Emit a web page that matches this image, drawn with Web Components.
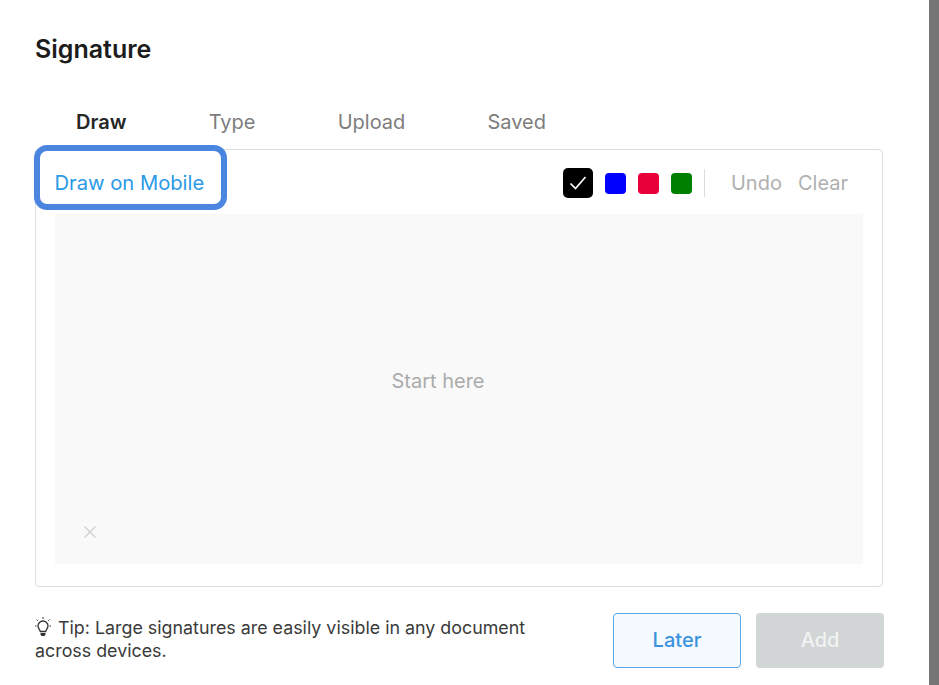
<!DOCTYPE html>
<html>
<head>
<meta charset="utf-8">
<style>
    html, body { margin: 0; height: 100%; }
    body { background: #757575; font-family: Inter, "Liberation Sans", sans-serif; overflow: hidden; }
</style>
</head>
<body>
<template id="signature_dialog_tpl">
    <style>
        :host {
            display: block;
            width: 929px;
            height: 685px;
            box-sizing: border-box;
            background: #fff;
            padding: 33px 46px 0 35px;
            overflow: hidden;
            color: #1f1f1f;
        }
        h1 {
            margin: 0;
            font-size: 25px;
            line-height: 32px;
            font-weight: 600;
            color: #1c1c1c;
        }
        .footer {
            display: flex;
            justify-content: space-between;
            margin-top: 26px;
            margin-right: -1px;
        }
    </style>
    <h1><slot name="title"></slot></h1>
    <signature-tabs></signature-tabs>
    <signature-pad></signature-pad>
    <div class="footer">
        <signature-tip></signature-tip>
        <signature-actions></signature-actions>
    </div>
</template>

<template id="signature_tabs_tpl">
    <style>
        :host {
            display: flex;
            gap: 82.2px;
            margin-top: 42px;
            padding-left: 41px;
            height: 42px;
            box-sizing: border-box;
            font-size: 20px;
            line-height: 30px;
            color: #7d7d7d;
        }
        .active { font-weight: 600; color: #262626; }
    </style>
    <span class="active">Draw</span>
    <span>Type</span>
    <span>Upload</span>
    <span>Saved</span>
</template>

<template id="signature_pad_tpl">
    <style>
        :host {
            display: block;
            position: relative;
            box-sizing: border-box;
            height: 438px;
            border: 1px solid #dedede;
            border-radius: 4px;
            padding: 0 19px 0 19px;
        }
        .toolbar {
            display: flex;
            align-items: center;
            box-sizing: border-box;
            height: 64px;
            padding-top: 2px;
        }
        .mobile {
            font-size: 20.2px;
            color: #2b9ae6;
            margin: 0 auto 2px -0.5px;
        }
        .highlight {
            position: absolute;
            left: -2px;
            top: -5px;
            width: 193px;
            height: 65px;
            box-sizing: border-box;
            border: 6px solid #4a86e0;
            border-radius: 13px;
        }
        .swatch {
            width: 21px;
            height: 21px;
            border-radius: 4px;
            margin-left: 12px;
        }
        .swatch.current {
            width: 30px;
            height: 30px;
            border-radius: 5px;
            margin-left: 0;
            background: #000;
            display: flex;
            align-items: center;
            justify-content: center;
        }
        .divider {
            width: 1px;
            height: 28px;
            background: #dcdcdc;
            margin: 0 26px 0 12px;
        }
        .action { font-size: 20px; color: #b0b0b0; }
        .action + .action { margin-left: 16px; margin-right: 15px; }
        .canvas {
            height: 350px;
            box-sizing: border-box;
            padding: 0 42px 16px 0;
            background: #f9f9f9;
            display: flex;
            align-items: center;
            justify-content: center;
            position: relative;
            font-size: 20px;
            color: #ababab;
        }
        .mark {
            position: absolute;
            left: 29px;
            bottom: 26px;
            width: 12px;
            height: 12px;
        }
    </style>
    <div class="toolbar">
        <span class="mobile">Draw on Mobile</span>
        <div class="swatch current">
            <svg width="18" height="16" viewBox="0 0 18 16" fill="none" stroke="#fff" stroke-width="1.7"><path d="M1.5 8.5 6.5 13.5 16.5 2"/></svg>
        </div>
        <div class="swatch" style="background:#0000ff"></div>
        <div class="swatch" style="background:#e8003a"></div>
        <div class="swatch" style="background:#008000"></div>
        <div class="divider"></div>
        <span class="action">Undo</span>
        <span class="action">Clear</span>
    </div>
    <div class="highlight"></div>
    <div class="canvas">
        Start here
        <svg class="mark" viewBox="0 0 12 12" fill="none" stroke="#cfcfcf" stroke-width="1.3"><path d="M.5.5l11 11M11.500.5l-11 11"/></svg>
    </div>
</template>

<template id="signature_tip_tpl">
    <style>
        :host {
            display: block;
            width: 510px;
            font-size: 17.85px;
            line-height: 23px;
            color: #3a3a3a;
            margin-top: 3px;
        }
        svg { vertical-align: -3px; margin-right: 7px; }
    </style>
    <svg width="16" height="20" viewBox="0 0 16 20" fill="none" stroke="#333" stroke-width="1.3"><path d="M3 9a5 5 0 1 1 10 0c0 2-1.500 3-2.300 5.500H5.300C4.500 12 3 11 3 9Z"/><path d="M5.500 16h5v1.500l-1 1.500h-3l-1-1.500Z" fill="#333" stroke="none"/><path d="M8 0v2M1.600 2.600l1.200 1.200M14.400 2.600l-1.200 1.200M0 9h1.500M14.500 9H16" stroke-width="1"/></svg>Tip: Large signatures are easily visible in any document across devices.
</template>

<template id="signature_actions_tpl">
    <style>
        :host { display: flex; gap: 15px; }
        button {
            width: 128px;
            height: 55px;
            box-sizing: border-box;
            border-radius: 4px;
            font: 500 20px Inter, "Liberation Sans", sans-serif;
            padding: 0 0 2px;
        }
        .later { background: #f4faff; border: 1.5px solid #5aa8e4; color: #3b93df; }
        .add { background: #d1d5d6; border: 0; color: #f1f3f3; }
    </style>
    <button class="later">Later</button>
    <button class="add">Add</button>
</template>

<signature-dialog><span slot="title">Signature</span></signature-dialog>

<script type="module">
    class TemplateElement extends HTMLElement {
        constructor(tplId) {
            super();
            this.attachShadow({mode: 'open'});
            this.shadowRoot.appendChild(document.getElementById(tplId).content.cloneNode(true));
        }
    }
    class SignatureDialog extends TemplateElement { constructor() { super('signature_dialog_tpl'); } }
    class SignatureTabs extends TemplateElement { constructor() { super('signature_tabs_tpl'); } }
    class SignaturePad extends TemplateElement { constructor() { super('signature_pad_tpl'); } }
    class SignatureTip extends TemplateElement { constructor() { super('signature_tip_tpl'); } }
    class SignatureActions extends TemplateElement { constructor() { super('signature_actions_tpl'); } }

    customElements.define('signature-tabs', SignatureTabs);
    customElements.define('signature-pad', SignaturePad);
    customElements.define('signature-tip', SignatureTip);
    customElements.define('signature-actions', SignatureActions);
    customElements.define('signature-dialog', SignatureDialog);
</script>
</body>
</html>
